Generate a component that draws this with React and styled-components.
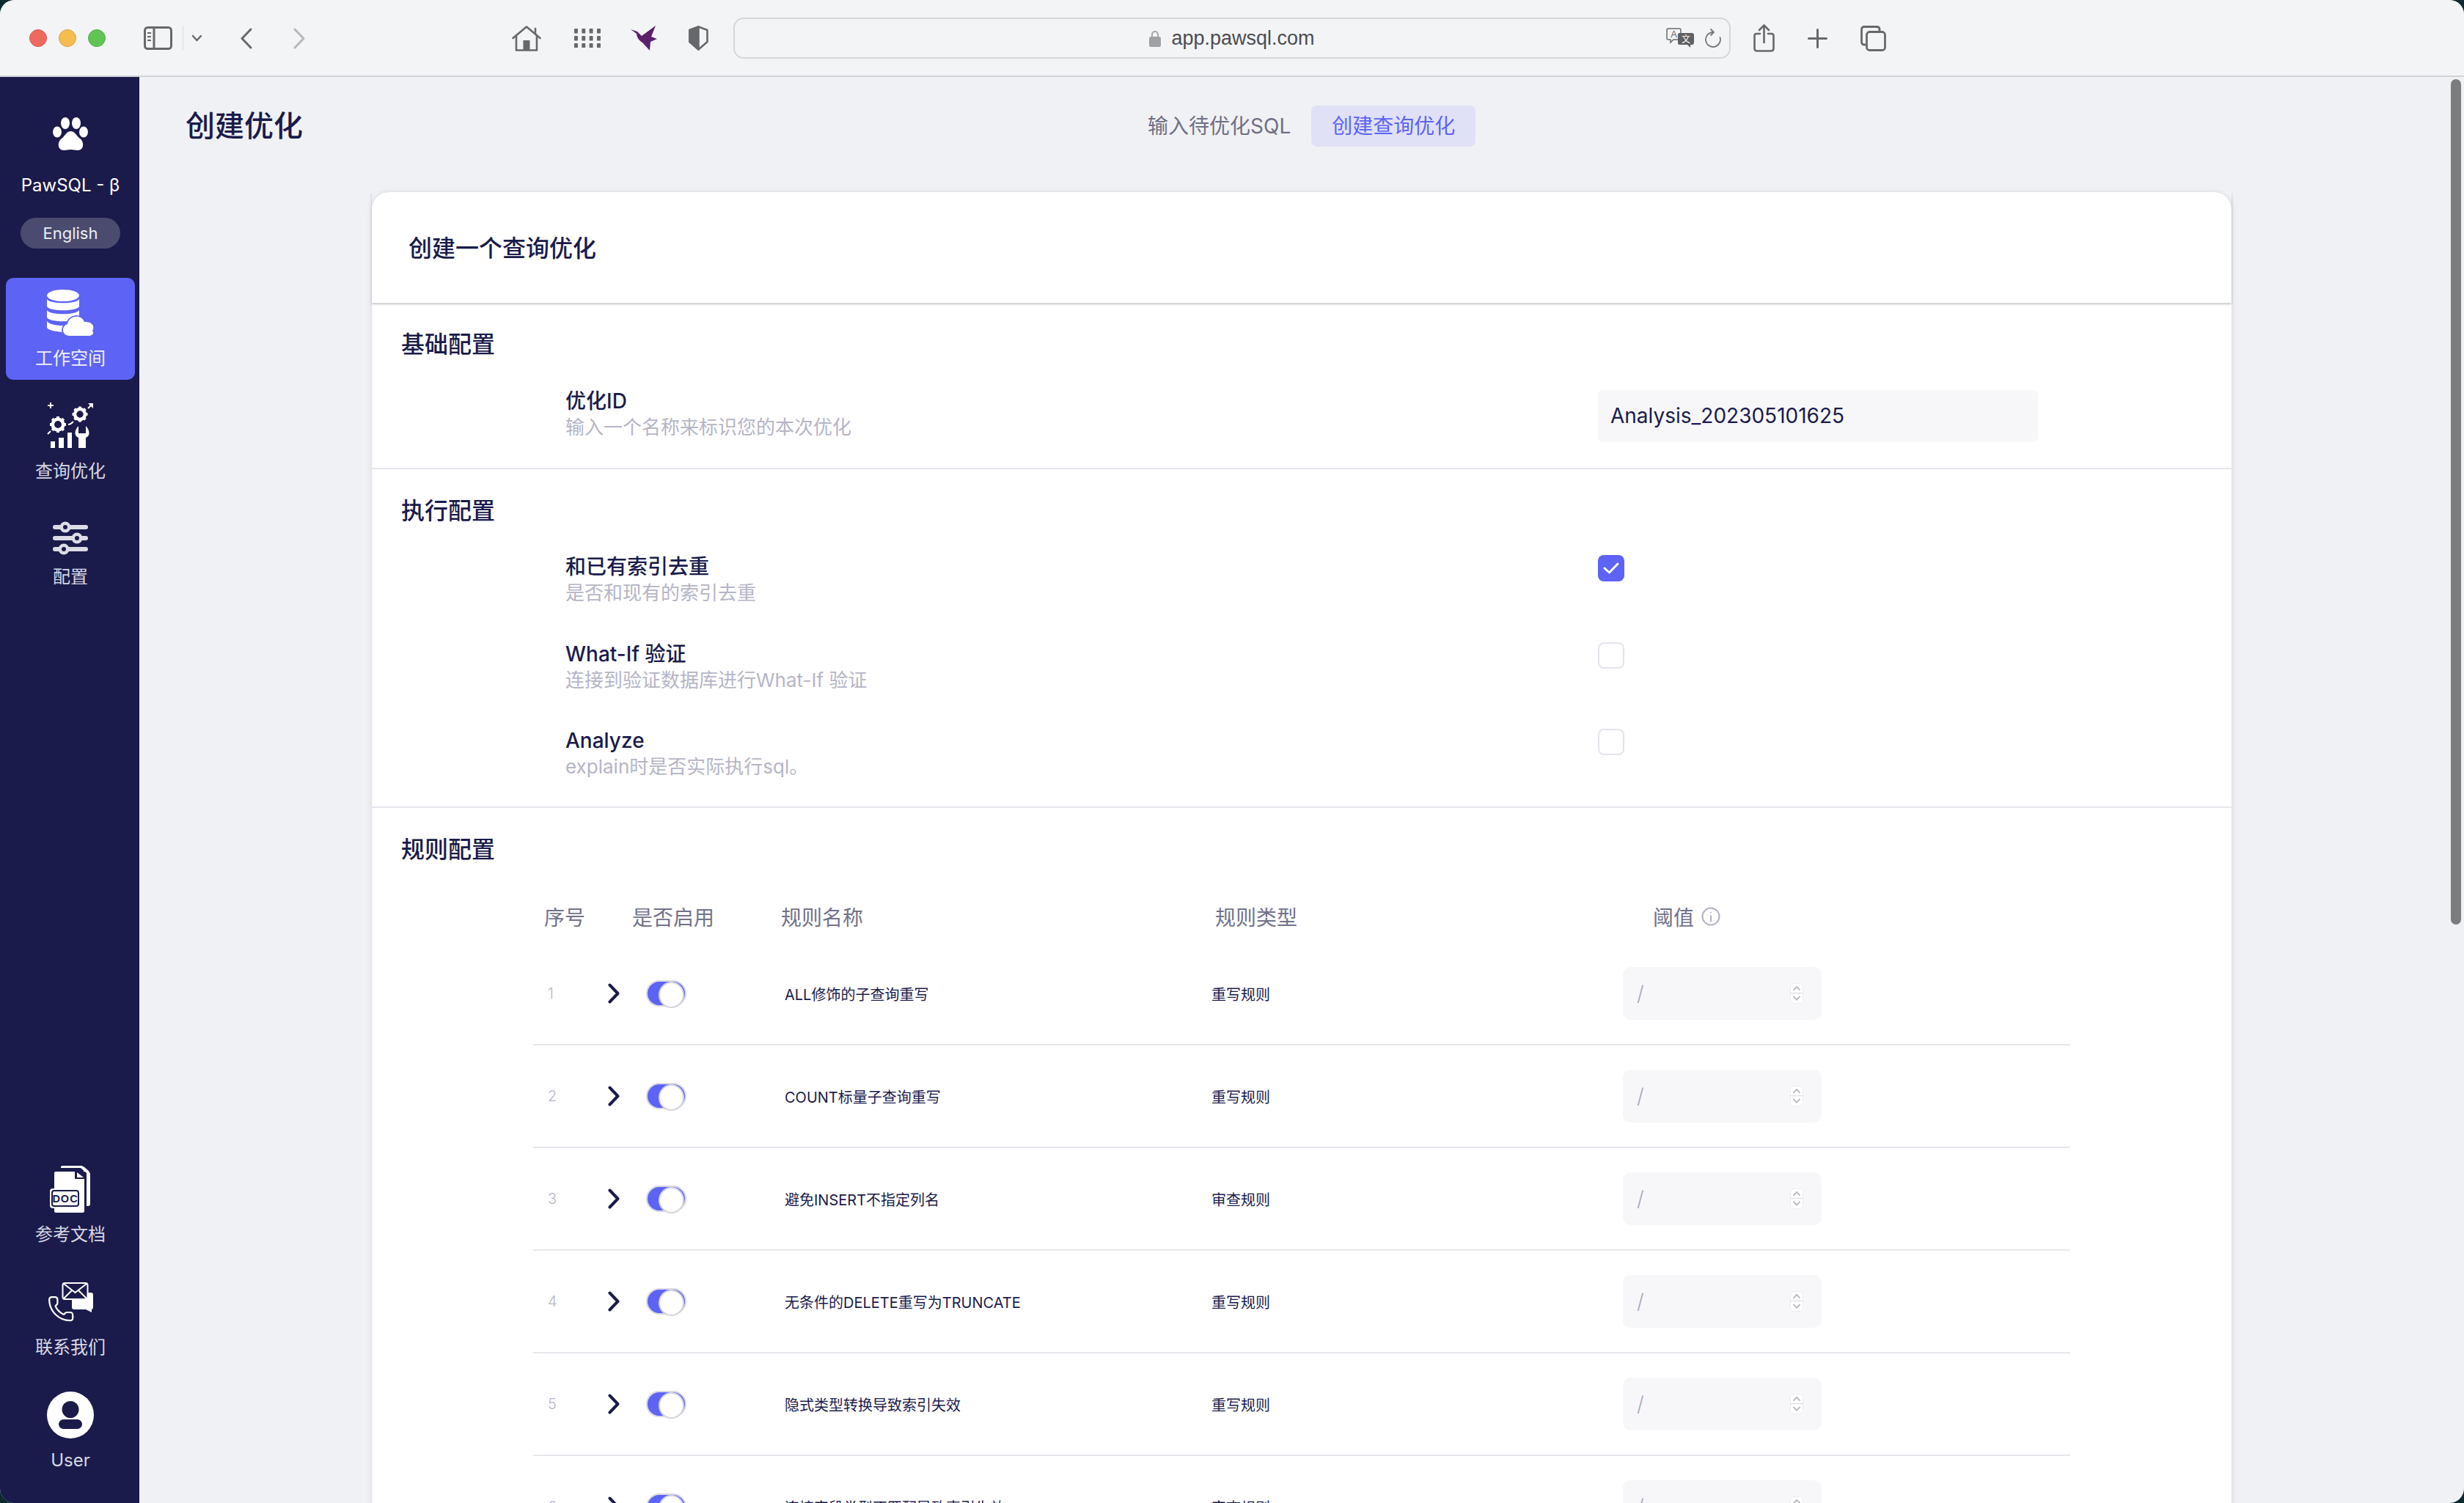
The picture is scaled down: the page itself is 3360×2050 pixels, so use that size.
import React from 'react';
import styled, { createGlobalStyle } from 'styled-components';

const NAVY = '#1a1b4b';
const BLUE = '#5d63f5';
const GREY = '#67686b';

const Global = createGlobalStyle`
  html, body { margin: 0; padding: 0; background: #0c2a30; overflow: hidden; }
  * { box-sizing: border-box; }
  body { font-family: Inter, "Noto Sans CJK SC", sans-serif; color: ${NAVY}; }
`;

const Window = styled.div`
  position: relative;
  width: 3360px;
  height: 2050px;
  overflow: hidden;
  border-radius: 20px;
  background: #f0f1f4;
  display: flex;
  flex-direction: column;
`;

/* ---- browser toolbar ---- */
const Chrome = styled.header`
  flex: none;
  height: 105px;
  background: #f3f4f6;
  border-bottom: 2px solid #d2d3d6;
  padding: 1px 0 0 40px;
  display: flex;
  align-items: center;
`;
const Lights = styled.div`
  display: flex;
  gap: 16px;
`;
const Light = styled.span`
  width: 24px;
  height: 24px;
  border-radius: 50%;
  background: ${p => p.$c};
  border: 1px solid ${p => p.$b};
`;
const ToolIcon = styled.svg`
  flex: none;
  display: block;
  margin-left: ${p => p.$ml}px;
  color: ${p => p.$c || GREY};
`;
const ToolDivider = styled.span`
  flex: none;
  width: 1px;
  height: 34px;
  margin-left: 14px;
  background: #dcdde0;
`;
const UrlBar = styled.div`
  flex: none;
  width: 1360px;
  height: 56px;
  margin-left: 34px;
  border: 2px solid #d6d7da;
  border-radius: 14px;
  display: grid;
  grid-template-columns: 1fr auto 1fr;
  align-items: center;
`;
const UrlCenter = styled.div`
  grid-column: 2;
  display: flex;
  align-items: center;
  gap: 14px;
  padding-top: 1px;
  font-family: "Liberation Sans", Arial, sans-serif;
  font-size: 27px;
  color: #4c4d50;
`;
const UrlTools = styled.div`
  grid-column: 3;
  display: flex;
  justify-content: flex-end;
  align-items: center;
  padding-right: 11px;
`;

/* ---- sidebar ---- */
const Body = styled.div`
  flex: 1;
  min-height: 0;
  display: flex;
`;
const Sidebar = styled.aside`
  flex: none;
  width: 190px;
  background: ${NAVY};
  display: flex;
  flex-direction: column;
  align-items: center;
  padding: 55px 0 0 2px;
`;
const Brand = styled.div`
  margin-top: 32px;
  height: 30px;
  line-height: 30px;
  font-size: 24px;
  color: #fff;
  font-weight: 400;
`;
const LangPill = styled.div`
  margin-top: 29px;
  width: 136px;
  height: 42px;
  border-radius: 21px;
  background: #4a4b6e;
  color: #eeeef4;
  font-size: 22px;
  display: flex;
  align-items: center;
  justify-content: center;
`;
const NavItem = styled.div`
  flex: none;
  width: 176px;
  margin-top: ${p => p.$mt || 0}px;
  padding: ${p => p.$top}px 0 ${p => p.$bottom || 0}px;
  border-radius: 10px;
  background: ${p => (p.$active ? BLUE : 'transparent')};
  display: flex;
  flex-direction: column;
  align-items: center;
`;
const NavIcon = styled.svg`
  display: block;
  flex: none;
`;
const NavLabel = styled.div`
  margin-top: ${p => p.$gap}px;
  height: 30px;
  line-height: 30px;
  font-size: 24px;
  color: ${p => (p.$active ? '#f2f2ff' : '#d8d8e4')};
  font-weight: 400;
`;
const NavBottom = styled.div`
  margin-top: auto;
  display: flex;
  flex-direction: column;
  align-items: center;
  padding-bottom: 43px;
`;

/* ---- main ---- */
const Main = styled.main`
  flex: 1;
  min-width: 0;
  overflow: hidden;
`;
const PageHeader = styled.div`
  height: 157px;
  padding: 39px 0 0 63px;
  display: flex;
  align-items: flex-start;
`;
const PageTitle = styled.h1`
  flex: none;
  margin: 0;
  width: 160px;
  font-size: 40px;
  line-height: 56px;
  font-weight: 500;
  color: ${NAVY};
`;
const Steps = styled.div`
  display: flex;
  margin-left: 1124px;
`;
const Step = styled.div`
  height: 56px;
  padding: 0 28px;
  line-height: 56px;
  font-size: 28px;
  border-radius: 8px;
  color: ${p => (p.$active ? BLUE : '#6f6f85')};
  background: ${p => (p.$active ? '#e0e1f6' : 'transparent')};
`;
const Card = styled.section`
  width: 2536px;
  margin-left: 317px;
  background: #fff;
  border-radius: 24px 24px 0 0;
  box-shadow: 0 1px 7px rgba(40, 40, 80, 0.14);
`;
const CardHeader = styled.div`
  height: 151px;
  padding: 0 0 4px 50px;
  display: flex;
  align-items: center;
  font-size: 32px;
  font-weight: 500;
  color: ${NAVY};
  box-shadow: 0 2px 3px rgba(0, 0, 0, 0.22);
`;
const Section = styled.div`
  padding: 35px 0 ${p => p.$pb || 0}px;
  border-bottom: ${p => (p.$last ? 'none' : '2px solid #e5e5ec')};
`;
const SectionTitle = styled.h2`
  margin: 0 0 0 40px;
  font-size: 32px;
  line-height: 44px;
  font-weight: 500;
  color: ${NAVY};
`;
const Settings = styled.div`
  margin-top: ${p => p.$mt}px;
  padding-left: 264px;
  display: flex;
  flex-direction: column;
  gap: 46.5px;
`;
const SettingRow = styled.div`
  display: grid;
  grid-template-columns: 1408px 600px;
  align-items: start;
`;
const SettingLabel = styled.div`
  font-size: 28px;
  line-height: 36px;
  font-weight: 500;
  color: ${NAVY};
`;
const SettingHint = styled.div`
  font-size: 26px;
  line-height: 36px;
  color: #b5b5c6;
`;
const TextField = styled.div`
  margin-top: 3px;
  height: 71px;
  padding-left: 17px;
  border-radius: 8px;
  background: #f7f7fa;
  font-size: 28px;
  line-height: 71px;
  color: ${NAVY};
`;
const Check = styled.div`
  margin-top: 2px;
  width: 36px;
  height: 36px;
  border-radius: 8px;
  background: ${p => (p.$on ? BLUE : '#fff')};
  border: ${p => (p.$on ? 'none' : '2px solid #e4e4ec')};
  display: flex;
  align-items: center;
  justify-content: center;
`;

/* ---- rules table ---- */
const Table = styled.div`
  margin: 49px 0 0 220px;
  width: 2096px;
`;
const HeadRow = styled.div`
  height: 56px;
  padding: 0 0 16px 15px;
  display: grid;
  grid-template-columns: 120px 203px 592px 597px auto;
  align-items: center;
  font-size: 28px;
  color: #72728a;
`;
const HeadCell = styled.div`
  display: flex;
  align-items: center;
  gap: 10px;
`;
const RuleRow = styled.div`
  height: 140px;
  padding-left: 20px;
  border-bottom: 2px solid #e7e7ee;
  display: grid;
  grid-template-columns: 82px 52px 189px 582px 561px 271px;
  align-items: center;
  font-size: 20px;
  color: ${NAVY};
`;
const RuleNo = styled.div`
  color: #b5b5c6;
  font-size: 20px;
  font-weight: 300;
`;
const Toggle = styled.div`
  position: relative;
  width: 55px;
  height: 36px;
  border-radius: 18px;
  background: ${BLUE};
  border: 2px solid #d9d9e3;
  &::after {
    content: '';
    position: absolute;
    top: 0;
    right: 1px;
    width: 31px;
    height: 32px;
    border-radius: 50%;
    background: #fff;
    border: 2px solid #d4d4de;
  }
`;
const NumberField = styled.div`
  height: 72px;
  padding: 0 25px 0 19px;
  border-radius: 10px;
  background: #f7f7fa;
  display: flex;
  align-items: center;
  justify-content: space-between;
  font-size: 28px;
  font-weight: 300;
  color: #a9a9b8;
`;

const Chevron = () => (
  <svg width="16" height="28" viewBox="0 0 16 28" fill="none" stroke={NAVY} strokeWidth="4" strokeLinecap="round" strokeLinejoin="round">
    <path d="M2.5 2.5 L13.5 14 L2.5 25.5" />
  </svg>
);

const Spinner = () => (
  <svg width="18" height="28" viewBox="0 0 18 28" fill="none">
    <rect x="0.5" y="0.5" width="17" height="27" rx="5" fill="#fff" stroke="#ededf1" />
    <path d="M0 13.5 H18" stroke="#e2e2e8" strokeWidth="1.5" />
    <path d="M5 9 L9 5 L13 9" stroke="#bcbcc2" strokeWidth="2" strokeLinecap="round" />
    <path d="M5 18.5 L9 22.5 L13 18.5" stroke="#bcbcc2" strokeWidth="2" strokeLinecap="round" />
  </svg>
);

const Gear = ({ cx, cy, r }) => (
  <g fill="#fff">
    <circle cx={cx} cy={cy} r={r * 0.66} fill="none" stroke="#fff" strokeWidth={r * 0.42} />
    {[0, 45, 90, 135, 180, 225, 270, 315].map(a => (
      <rect key={a} x={cx - r * 0.18} y={cy - r} width={r * 0.36} height={r * 0.4} transform={`rotate(${a} ${cx} ${cy})`} />
    ))}
  </g>
);

const PawIcon = () => (
  <NavIcon width="48" height="46" viewBox="0 0 48 46" fill="#fff">
    <ellipse cx="6" cy="20" rx="6" ry="7.5" />
    <ellipse cx="17" cy="8" rx="6" ry="8" />
    <ellipse cx="32" cy="8" rx="6" ry="8" />
    <ellipse cx="42" cy="20" rx="6" ry="7.5" />
    <path d="M24.5 19 C30 19 32 25 37 29 C43 33 43 45 34 45 C30 45 28 44 24.5 44 C21 44 19 45 15 45 C6 45 6 33 12 29 C17 25 19 19 24.5 19 Z" />
  </NavIcon>
);

const DbIcon = () => (
  <NavIcon width="66" height="65" viewBox="0 0 66 65">
    <ellipse cx="23" cy="8" rx="22" ry="8" fill="#fff" />
    <path d="M1 13 C4 20 42 20 45 13 V23 C42 30 4 30 1 23 Z" fill="#fff" />
    <path d="M1 28 C4 35 42 35 45 28 V38 C42 45 4 45 1 38 Z" fill="#fff" />
    <path d="M1 43 C4 49 24 50 34 49 L30 58 C16 58 4 56 1 52 Z" fill="#fff" />
    <path d="M32 63 C21 63 20 50 29 47 C31 35 48 33 52 44 C62 43 67 50 63 56 C66 60 62 63 58 63 Z" fill="#fff" stroke={BLUE} strokeWidth="3.5" paintOrder="stroke" />
  </NavIcon>
);

const GearsIcon = () => (
  <NavIcon width="64" height="62" viewBox="0 0 64 62" fill="#fff">
    <path d="M5 4 H1 M5 4 H9 M5 0 V8" stroke="#fff" strokeWidth="2" />
    <Gear cx={15} cy={30} r={11} />
    <Gear cx={45} cy={16} r={10.5} />
    <path d="M29 30 C32 30 34 28 36 26" stroke="#fff" strokeWidth="2" fill="none" />
    <path d="M1 43 L5 39" stroke="#fff" strokeWidth="2" />
    <path d="M56 8 L62 2" stroke="#fff" strokeWidth="2" />
    <path d="M56 1 H63 V8 Z" />
    <rect x="5" y="53" width="6" height="9" />
    <rect x="16" y="48" width="7" height="14" />
    <rect x="28" y="41" width="6" height="21" />
    <path d="M42 62 V48 C36 46 36 38 42 32 V42 H52 V32 C58 38 58 46 52 48 V62 Z" transform="translate(1 0)" />
  </NavIcon>
);

const SlidersIcon = () => (
  <NavIcon width="48" height="46" viewBox="0 0 48 46">
    {[[8, 17], [23, 33], [38, 15]].map(([y, x]) => (
      <g key={y}>
        <path d={`M3 ${y} H45`} stroke="#dcdce6" strokeWidth="6" strokeLinecap="round" />
        <circle cx={x} cy={y} r="7.5" fill="#dcdce6" />
        <circle cx={x} cy={y} r="3" fill={NAVY} />
      </g>
    ))}
  </NavIcon>
);

const DocIcon = () => (
  <NavIcon width="56" height="64" viewBox="0 0 56 64">
    <path d="M15 2 Q15 0 17 0 H44 L55 10 V52 Q55 55 52 55 H50 V10 L42 3 H15 Z" fill="#fff" />
    <path d="M46 1 L54 8 H46 Z" fill="#fff" />
    <path d="M6 10 Q6 8 8 8 H34 V18 H47 V62 Q47 64 45 64 H8 Q6 64 6 62 Z" fill="#fff" />
    <path d="M37 9 L46 16 H37 Z" fill="#fff" />
    <rect x="0" y="31" width="42" height="27" rx="4" fill="#fff" />
    <rect x="3" y="34" width="36" height="21" rx="3" fill="#fff" stroke={NAVY} strokeWidth="2" />
    <text x="21" y="50" textAnchor="middle" fontFamily="Liberation Sans, sans-serif" fontWeight="700" fontSize="14.5" letterSpacing="1" fill={NAVY}>DOC</text>
  </NavIcon>
);

const ContactIcon = () => (
  <NavIcon width="62" height="56" viewBox="0 0 62 56">
    <rect x="33" y="14" width="29" height="23" rx="3" fill="#fff" />
    <path d="M50 36 H60 V41 Z" fill="#fff" />
    <rect x="20.5" y="1" width="34" height="22" rx="3" fill={NAVY} stroke="#fff" strokeWidth="2" />
    <path d="M22 2 L37.5 14 L53 2 M22 22 L33 11 M53 22 L42 11" stroke="#fff" strokeWidth="2" fill="none" />
    <g transform="translate(-1 17) scale(1.6)">
      <path d="M13.832 16.568a1 1 0 0 0 1.213-.303l.355-.465A2 2 0 0 1 17 15h3a2 2 0 0 1 2 2v3a2 2 0 0 1-2 2A18 18 0 0 1 2 4a2 2 0 0 1 2-2h3a2 2 0 0 1 2 2v3a2 2 0 0 1-.8 1.6l-.468.351a1 1 0 0 0-.292 1.233 14 14 0 0 0 6.392 6.384" fill="none" stroke="#fff" strokeWidth="1.4" />
    </g>
  </NavIcon>
);

const UserIcon = () => (
  <NavIcon width="64" height="64" viewBox="0 0 64 64">
    <circle cx="32" cy="32" r="32" fill="#fff" />
    <circle cx="32" cy="24.5" r="11.5" fill={NAVY} />
    <rect x="16" y="38" width="32" height="13" rx="6.5" fill={NAVY} />
  </NavIcon>
);

const rules = [
  ['ALL修饰的子查询重写', '重写规则'],
  ['COUNT标量子查询重写', '重写规则'],
  ['避免INSERT不指定列名', '审查规则'],
  ['无条件的DELETE重写为TRUNCATE', '重写规则'],
  ['隐式类型转换导致索引失效', '重写规则'],
  ['连接字段类型不匹配导致索引失效', '审查规则'],
];

const Scrollbar = styled.div`
  position: absolute;
  top: 108px;
  left: 3342px;
  width: 14px;
  height: 1153px;
  border-radius: 7px;
  background: #7b7c7e;
`;

export default function App() {
  return (
    <Window>
      <Global />
      <Chrome>
        <Lights>
          <Light $c="#ee6a5f" $b="#d8564b" />
          <Light $c="#f5bd4f" $b="#d9a13b" />
          <Light $c="#61c454" $b="#52ad46" />
        </Lights>
        <ToolIcon $ml={52} width="39" height="32" viewBox="0 0 39 32" fill="none" stroke="currentColor" strokeWidth="3">
          <rect x="1.5" y="1.5" width="36" height="29" rx="4" />
          <path d="M14 2 V30" />
          <path d="M5 9 H10 M5 14 H10 M5 19 H10" strokeWidth="2.2" />
        </ToolIcon>
        <ToolDivider />
        <ToolIcon $ml={11} width="15" height="10" viewBox="0 0 15 10" fill="none" stroke="currentColor" strokeWidth="2.4" strokeLinecap="round">
          <path d="M2 2 L7.5 8 L13 2" />
        </ToolIcon>
        <ToolIcon $ml={52} width="16" height="29" viewBox="0 0 16 29" fill="none" stroke="currentColor" strokeWidth="3" strokeLinecap="round" strokeLinejoin="round">
          <path d="M14 2 L2 14.5 L14 27" />
        </ToolIcon>
        <ToolIcon $ml={56} $c="#b6b7ba" width="16" height="29" viewBox="0 0 16 29" fill="none" stroke="currentColor" strokeWidth="3" strokeLinecap="round" strokeLinejoin="round">
          <path d="M2 2 L14 14.5 L2 27" />
        </ToolIcon>
        <ToolIcon $ml={282} width="40" height="35" viewBox="0 0 40 35" fill="none" stroke="currentColor" strokeWidth="2.6" strokeLinecap="round" strokeLinejoin="round">
          <path d="M1.5 17 L20 1.5 L38.5 17" />
          <path d="M6 13 V33.5 H34 V13" />
          <path d="M32 4 V11" />
          <rect x="15.5" y="20" width="9" height="13" fill="currentColor" stroke="none" />
        </ToolIcon>
        <ToolIcon $ml={45} width="36" height="26" viewBox="0 0 36 26" fill="currentColor">
          {[0, 10, 20].map(y => [0, 10.3, 20.6, 31].map(x => <rect key={`${x}-${y}`} x={x} y={y} width="5" height="6.5" rx="1" />))}
        </ToolIcon>
        <ToolIcon $ml={41} width="36" height="34" viewBox="0 0 36 34" fill="#5c1f6e">
          <path d="M0 5 L9 8 L15 14 L34 0 L28 15 L36 18 L27 22 L26 34 L17 24 Q8 18 8 11 Z" />
        </ToolIcon>
        <ToolIcon $ml={43} width="27" height="34" viewBox="0 0 27 34" fill="none" stroke="currentColor" strokeWidth="2.6" strokeLinejoin="round">
          <path d="M13.5 1.5 L25.5 6 V22 L13.5 32.5 L1.5 22 V6 Z" />
          <path d="M13.5 1.5 L1.5 6 V22 L13.5 32.5 Z" fill="currentColor" />
        </ToolIcon>
        <UrlBar>
          <UrlCenter>
            <svg width="16" height="23" viewBox="0 0 16 23">
              <path d="M4 10 V6 A4 4 0 0 1 12 6 V10" fill="none" stroke="#a6a7aa" strokeWidth="2" />
              <rect x="0" y="9" width="16" height="14" rx="2.5" fill="#a0a1a4" />
            </svg>
            app.pawsql.com
          </UrlCenter>
          <UrlTools>
            <svg width="38" height="28" viewBox="0 0 38 28">
              <path d="M3 1 H18 Q20 1 20 3 V14 Q20 16 18 16 H10 L6 20 V16 H3 Q1 16 1 14 V3 Q1 1 3 1 Z" fill="none" stroke="#6a6b6e" strokeWidth="1.5" />
              <text x="10.5" y="13" textAnchor="middle" fontSize="13" fontFamily="Liberation Sans, sans-serif" fill="#6a6b6e">A</text>
              <path d="M18 7 H35 Q38 7 38 10 V20 Q38 23 35 23 H33 V27 L29 23 H18 Q16 23 16 20 V10 Q16 7 18 7 Z" fill="#5f6063" />
              <text x="27" y="20" textAnchor="middle" fontSize="12" fontFamily="Noto Sans CJK SC, sans-serif" fill="#fff">文</text>
            </svg>
            <svg style={{ marginLeft: 15 }} width="22" height="26" viewBox="0 0 22 26" fill="none" stroke="#77787b" strokeWidth="1.8" strokeLinecap="round">
              <path d="M11 5 A10 10 0 1 0 20.5 12" />
              <path d="M8 1 L12 5 L8 9" />
            </svg>
          </UrlTools>
        </UrlBar>
        <ToolIcon $ml={31} width="29" height="38" viewBox="0 0 29 38" fill="none" stroke="currentColor" strokeWidth="2.6" strokeLinecap="round" strokeLinejoin="round">
          <path d="M9 13 H4 Q1.5 13 1.5 16 V33 Q1.5 36.5 5 36.5 H24 Q27.5 36.5 27.5 33 V16 Q27.5 13 25 13 H20" />
          <path d="M14.5 25 V2 M8 8 L14.5 1.5 L21 8" />
        </ToolIcon>
        <ToolIcon $ml={45} width="27" height="27" viewBox="0 0 27 27" fill="none" stroke="currentColor" strokeWidth="3" strokeLinecap="round">
          <path d="M13.5 1.5 V25.5 M1.5 13.5 H25.5" />
        </ToolIcon>
        <ToolIcon $ml={45} width="35" height="35" viewBox="0 0 35 35" fill="none" stroke="currentColor" strokeWidth="2.8" strokeLinejoin="round">
          <path d="M7 26 H5 Q1.5 26 1.5 22 V5 Q1.5 1.5 5 1.5 H22 Q26 1.5 26 5 V7" />
          <rect x="8.5" y="8.5" width="25" height="25" rx="4" />
        </ToolIcon>
      </Chrome>

      <Body>
        <Sidebar>
          <PawIcon />
          <Brand>PawSQL - β</Brand>
          <LangPill>English</LangPill>
          <NavItem $active $mt={40} $top={16} $bottom={14}>
            <DbIcon />
            <NavLabel $active $gap={14}>工作空间</NavLabel>
          </NavItem>
          <NavItem $top={31}>
            <GearsIcon />
            <NavLabel $gap={17}>查询优化</NavLabel>
          </NavItem>
          <NavItem $top={53}>
            <SlidersIcon />
            <NavLabel $gap={15}>配置</NavLabel>
          </NavItem>
          <NavBottom>
            <NavItem $top={0}>
              <DocIcon />
              <NavLabel $gap={15}>参考文档</NavLabel>
            </NavItem>
            <NavItem $top={50}>
              <ContactIcon />
              <NavLabel $gap={18}>联系我们</NavLabel>
            </NavItem>
            <NavItem $top={45}>
              <UserIcon />
              <NavLabel $gap={15}>User</NavLabel>
            </NavItem>
          </NavBottom>
        </Sidebar>

        <Main>
          <PageHeader>
            <PageTitle>创建优化</PageTitle>
            <Steps>
              <Step>输入待优化SQL</Step>
              <Step $active>创建查询优化</Step>
            </Steps>
          </PageHeader>
          <Card>
            <CardHeader>创建一个查询优化</CardHeader>
            <Section $pb={35}>
              <SectionTitle>基础配置</SectionTitle>
              <Settings $mt={37}>
                <SettingRow>
                  <div>
                    <SettingLabel>优化ID</SettingLabel>
                    <SettingHint>输入一个名称来标识您的本次优化</SettingHint>
                  </div>
                  <TextField>Analysis_202305101625</TextField>
                </SettingRow>
              </Settings>
            </Section>
            <Section $pb={36}>
              <SectionTitle>执行配置</SectionTitle>
              <Settings $mt={36}>
                <SettingRow>
                  <div>
                    <SettingLabel>和已有索引去重</SettingLabel>
                    <SettingHint>是否和现有的索引去重</SettingHint>
                  </div>
                  <Check $on>
                    <svg width="24" height="20" viewBox="0 0 24 20" fill="none" stroke="#fff" strokeWidth="3" strokeLinecap="round" strokeLinejoin="round">
                      <path d="M3 10 L9.5 16 L21 4" />
                    </svg>
                  </Check>
                </SettingRow>
                <SettingRow>
                  <div>
                    <SettingLabel>What-If 验证</SettingLabel>
                    <SettingHint>连接到验证数据库进行What-If 验证</SettingHint>
                  </div>
                  <Check />
                </SettingRow>
                <SettingRow>
                  <div>
                    <SettingLabel>Analyze</SettingLabel>
                    <SettingHint>explain时是否实际执行sql。</SettingHint>
                  </div>
                  <Check />
                </SettingRow>
              </Settings>
            </Section>
            <Section $last>
              <SectionTitle>规则配置</SectionTitle>
              <Table>
                <HeadRow>
                  <HeadCell>序号</HeadCell>
                  <HeadCell>是否启用</HeadCell>
                  <HeadCell>规则名称</HeadCell>
                  <HeadCell>规则类型</HeadCell>
                  <HeadCell>
                    阈值
                    <svg width="26" height="26" viewBox="0 0 26 26" fill="none" stroke="#b0b0c2" strokeWidth="2">
                      <circle cx="13" cy="13" r="11.5" />
                      <path d="M13 11.5 V20" />
                      <circle cx="13" cy="7.5" r="1" fill="#b0b0c2" stroke="none" />
                    </svg>
                  </HeadCell>
                </HeadRow>
                {rules.map(([name, type], i) => (
                  <RuleRow key={name}>
                    <RuleNo>{i + 1}</RuleNo>
                    <Chevron />
                    <Toggle />
                    <div>{name}</div>
                    <div>{type}</div>
                    <NumberField>
                      /
                      <Spinner />
                    </NumberField>
                  </RuleRow>
                ))}
              </Table>
            </Section>
          </Card>
        </Main>
      </Body>
      <Scrollbar />
    </Window>
  );
}
